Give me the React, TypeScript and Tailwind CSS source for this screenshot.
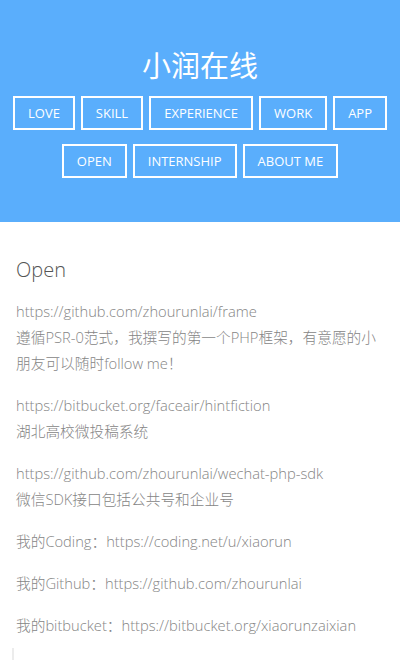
import React from 'react';

const font = { fontFamily: '"Open Sans", "Noto Sans CJK SC", sans-serif' };

const row1 = ['LOVE', 'SKILL', 'EXPERIENCE', 'WORK', 'APP'];
const row2 = ['OPEN', 'INTERNSHIP', 'ABOUT ME'];

const NavButton: React.FC<{ label: string }> = ({ label }) => (
    <a className="block border-2 border-white px-[13px] h-[34px] leading-[30px] text-[13px] text-white whitespace-nowrap">
        {label}
    </a>
);

const App: React.FC = () => {
    return (
        <div className="min-h-screen bg-white" style={font}>
            {/* Header */}
            <header className="bg-[#5aaefc] pt-[46px] pb-[44px] text-center">
                <h1 className="text-[29px] leading-[40px] text-white mb-[10px]">小润在线</h1>
                <nav className="flex flex-col items-center gap-[14px]">
                    <div className="flex justify-center gap-[6px]">
                        {row1.map((l) => <NavButton key={l} label={l} />)}
                    </div>
                    <div className="flex justify-center gap-[6px]">
                        {row2.map((l) => <NavButton key={l} label={l} />)}
                    </div>
                </nav>
            </header>

            {/* Content */}
            <main className="px-4 pt-[34px] font-light text-[14.7px] leading-[26px] text-[#858585]">
                <h2 className="text-[20px] leading-[28px] text-[#555] font-light mb-[14px]">Open</h2>
                <p className="mb-4">
                    https://github.com/zhourunlai/frame<br />
                    遵循PSR-0范式，我撰写的第一个PHP框架，有意愿的小朋友可以随时follow me！
                </p>
                <p className="mb-4">
                    https://bitbucket.org/faceair/hintfiction<br />
                    湖北高校微投稿系统
                </p>
                <p className="mb-4">
                    https://github.com/zhourunlai/wechat-php-sdk<br />
                    微信SDK接口包括公共号和企业号
                </p>
                <p className="mb-4">我的Coding：https://coding.net/u/xiaorun</p>
                <p className="mb-4">我的Github：https://github.com/zhourunlai</p>
                <p className="mb-[10px]">我的bitbucket：https://bitbucket.org/xiaorunzaixian</p>
                <div className="w-[2px] h-[20px] bg-[#ececec] -ml-[4px]" />
            </main>
        </div>
    );
};

export default App;
